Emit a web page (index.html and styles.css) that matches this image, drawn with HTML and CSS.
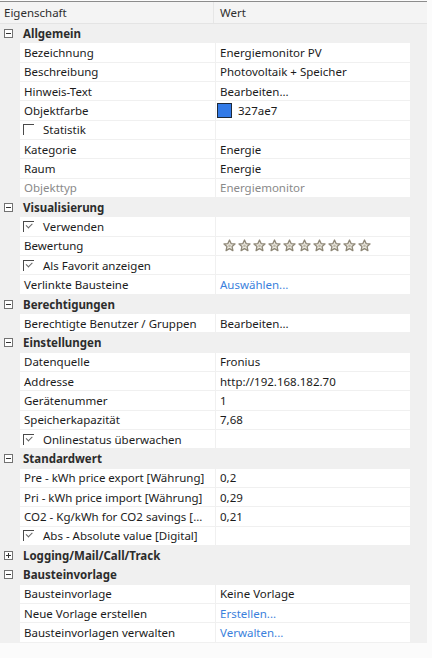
FILE: index.html
```html
<!DOCTYPE html>
<html lang="de">
<head>
<meta charset="utf-8">
<title>Eigenschaften</title>
<link rel="stylesheet" href="styles.css">
</head>
<body>
<div class="panel">
  <div class="head">
    <div class="hcell hname">Eigenschaft</div>
    <div class="hcell hval">Wert</div>
  </div>

  <div class="row cat"><span class="exp"></span><b>Allgemein</b></div>
  <div class="row"><span></span><div class="cell">Bezeichnung</div><div class="cell">Energiemonitor PV</div></div>
  <div class="row"><span></span><div class="cell">Beschreibung</div><div class="cell">Photovoltaik + Speicher</div></div>
  <div class="row"><span></span><div class="cell">Hinweis-Text</div><div class="cell">Bearbeiten...</div></div>
  <div class="row"><span></span><div class="cell">Objektfarbe</div><div class="cell"><i class="swatch"></i>327ae7</div></div>
  <div class="row"><span></span><div class="cell chk"><i class="box"></i>Statistik</div><div class="cell"></div></div>
  <div class="row"><span></span><div class="cell">Kategorie</div><div class="cell">Energie</div></div>
  <div class="row"><span></span><div class="cell">Raum</div><div class="cell">Energie</div></div>
  <div class="row"><span></span><div class="cell muted">Objekttyp</div><div class="cell muted">Energiemonitor</div></div>

  <div class="row cat"><span class="exp"></span><b>Visualisierung</b></div>
  <div class="row"><span></span><div class="cell chk"><i class="box on"></i>Verwenden</div><div class="cell"></div></div>
  <div class="row"><span></span><div class="cell">Bewertung</div><div class="cell stars" id="stars"></div></div>
  <div class="row"><span></span><div class="cell chk"><i class="box on"></i>Als Favorit anzeigen</div><div class="cell"></div></div>
  <div class="row"><span></span><div class="cell">Verlinkte Bausteine</div><div class="cell link">Auswählen...</div></div>

  <div class="row cat"><span class="exp"></span><b>Berechtigungen</b></div>
  <div class="row"><span></span><div class="cell">Berechtigte Benutzer / Gruppen</div><div class="cell">Bearbeiten...</div></div>

  <div class="row cat"><span class="exp"></span><b>Einstellungen</b></div>
  <div class="row"><span></span><div class="cell">Datenquelle</div><div class="cell">Fronius</div></div>
  <div class="row"><span></span><div class="cell">Addresse</div><div class="cell">http://192.168.182.70</div></div>
  <div class="row"><span></span><div class="cell">Gerätenummer</div><div class="cell">1</div></div>
  <div class="row"><span></span><div class="cell">Speicherkapazität</div><div class="cell">7,68</div></div>
  <div class="row"><span></span><div class="cell chk"><i class="box on"></i>Onlinestatus überwachen</div><div class="cell"></div></div>

  <div class="row cat"><span class="exp"></span><b>Standardwert</b></div>
  <div class="row"><span></span><div class="cell">Pre - kWh price export [Währung]</div><div class="cell">0,2</div></div>
  <div class="row"><span></span><div class="cell">Pri - kWh price import [Währung]</div><div class="cell">0,29</div></div>
  <div class="row"><span></span><div class="cell">CO2 - Kg/kWh for CO2 savings [...</div><div class="cell">0,21</div></div>
  <div class="row"><span></span><div class="cell chk"><i class="box on"></i>Abs - Absolute value [Digital]</div><div class="cell"></div></div>

  <div class="row cat"><span class="exp plus"></span><b>Logging/Mail/Call/Track</b></div>
  <div class="row cat"><span class="exp"></span><b>Bausteinvorlage</b></div>
  <div class="row"><span></span><div class="cell">Bausteinvorlage</div><div class="cell">Keine Vorlage</div></div>
  <div class="row"><span></span><div class="cell">Neue Vorlage erstellen</div><div class="cell link">Erstellen...</div></div>
  <div class="row"><span></span><div class="cell">Bausteinvorlagen verwalten</div><div class="cell link">Verwalten...</div></div>
</div>
<script src="stars.js"></script>
</body>
</html>
```

FILE: stars.js
```js
// Rating control: ten empty outline stars
const star = '<svg class="star" width="13" height="13" viewBox="0 0 13 13"><path d="M6.5 1 L8.1 4.6 L12 5 L9.1 7.6 L9.9 11.6 L6.5 9.6 L3.1 11.6 L3.9 7.6 L1 5 L4.9 4.6 Z"/><circle cx="6.5" cy="6.8" r="1.3"/></svg>';
document.getElementById('stars').innerHTML = star.repeat(10);
```

FILE: styles.css
```css
html, body {
  margin: 0;
  padding: 0;
  background: #fbfbfb;
}

body {
  font-family: "Noto Sans", sans-serif;
  font-size: 11.5px;
  color: #1b1b1b;
}

.panel {
  width: 427px;
  margin-top: 1px;
  border-top: 1px solid #8c8c8c;
  background: #f0f0f0;
}

/* column header */
.head {
  display: grid;
  grid-template-columns: 214px 213px;
  height: 22px;
  background: #f4f4f4;
  border-bottom: 1px solid #e4e4e4;
  box-sizing: border-box;
  align-items: center;
  color: #2e2e2e;
}

.hname {
  padding-left: 4px;
  border-right: 1px solid #e6e6e6;
  height: 100%;
  display: flex;
  align-items: center;
}

.hval {
  padding-left: 6px;
}

/* property rows */
.row {
  display: grid;
  grid-template-columns: 19px 195px 194px;
  column-gap: 1px;
  height: 19.33px;
  padding-bottom: 1px;
  box-sizing: border-box;
}

.cell {
  background: #fff;
  padding-left: 4px;
  display: flex;
  align-items: center;
  white-space: nowrap;
  overflow: hidden;
}

.muted {
  color: #8a8a8a;
}

.link {
  color: #3b7fdc;
}

/* category rows */
.row.cat {
  display: flex;
  align-items: center;
  padding-bottom: 0;
}

.row.cat b {
  font-weight: 700;
  color: #2c2c2c;
  margin-left: 9px;
}

.exp {
  position: relative;
  width: 9px;
  height: 9px;
  margin-left: 4px;
  border: 1px solid #727272;
  box-sizing: border-box;
  background: #fff;
}

.exp::before {
  content: "";
  position: absolute;
  left: 1px;
  top: 3px;
  width: 5px;
  height: 1px;
  background: #333;
}

.exp.plus::after {
  content: "";
  position: absolute;
  left: 3px;
  top: 1px;
  width: 1px;
  height: 5px;
  background: #333;
}

/* checkbox rows */
.chk {
  padding-left: 3px;
}

.box {
  position: relative;
  width: 11px;
  height: 11px;
  margin-right: 9px;
  border-top: 1px solid #4a4a4a;
  border-left: 1px solid #4a4a4a;
  box-sizing: border-box;
  flex: none;
}

.box.on::after {
  content: "";
  position: absolute;
  left: 2px;
  top: 1px;
  width: 5px;
  height: 2.5px;
  border-left: 1.2px solid #666;
  border-bottom: 1.2px solid #666;
  transform: rotate(-45deg);
}

/* colour swatch */
.swatch {
  width: 15px;
  height: 15px;
  margin-left: -3px;
  margin-right: 6px;
  background: #327ae7;
  border: 1px solid #1e2a3a;
  box-sizing: border-box;
  flex: none;
}

/* rating */
.stars {
  padding-left: 7px;
  gap: 2px;
}

.star {
  display: block;
  flex: none;
}

.star path {
  fill: #ebe8df;
  stroke: #8f8878;
  stroke-width: 1.3;
  stroke-linejoin: round;
}

.star circle {
  fill: #bdb7a7;
}
```
